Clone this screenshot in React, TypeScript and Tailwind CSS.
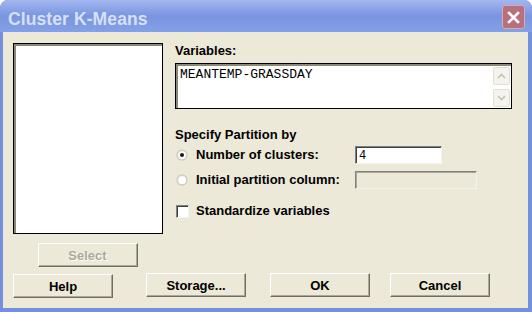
import React from "react";

const ui = { fontFamily: '"Liberation Sans", Arial, sans-serif' };
const mono = { fontFamily: '"Liberation Mono", "Courier New", monospace' };

function Button({
  label,
  disabled,
  className = "",
}: {
  label: string;
  disabled?: boolean;
  className?: string;
}) {
  return (
    <button
      className={`h-[24px] w-[100px] bg-[#ece9d8] border border-t-white border-l-white border-r-[#716f64] border-b-[#716f64] shadow-[inset_-1px_-1px_0_#aca899] text-[13px] font-bold leading-none ${
        disabled ? "text-[#aca899] [text-shadow:1px_1px_0_#ffffff]" : "text-black"
      } ${className}`}
    >
      {label}
    </button>
  );
}

function Radio({ checked }: { checked?: boolean }) {
  return (
    <svg width="12" height="12" viewBox="0 0 12 12" className="shrink-0">
      <circle cx="6" cy="6" r="5.5" fill="#c4c1b3" />
      <circle cx="6" cy="6" r="4.6" fill="#eeede6" />
      <circle cx="6.3" cy="6.3" r="3.6" fill="#ffffff" />
      {checked && <circle cx="6" cy="6" r="2" fill="#1a1a1a" />}
    </svg>
  );
}

function ScrollBtn({ up }: { up?: boolean }) {
  return (
    <div className="w-[17px] h-[18px] bg-[#f4f3ee] border border-[#e2e0d6] rounded-[2px] flex items-center justify-center">
      <svg width="9" height="6" viewBox="0 0 9 6">
        <path
          d={up ? "M1 5 L4.5 1.5 L8 5" : "M1 1 L4.5 4.5 L8 1"}
          fill="none"
          stroke="#c5c2b2"
          strokeWidth="1.6"
        />
      </svg>
    </div>
  );
}

export default function App() {
  return (
    <div className="w-[532px] h-[312px] bg-white" style={ui}>
      <div className="w-full h-full rounded-t-[8px] bg-[#7390dd] flex flex-col pl-[3px] pr-[4px] pb-[4px] overflow-hidden">
        {/* title bar */}
        <div className="h-[32px] -ml-[3px] -mr-[4px] px-[8px] flex items-center justify-between bg-gradient-to-b from-[#a3b7ef] via-[#7995e0] to-[#84a0e7] rounded-t-[8px]">
          <span className="text-[17.5px] font-bold text-[#d6e1f7] tracking-[0.1px] mt-[7px]">
            Cluster K-Means
          </span>
          <div className="w-[23px] h-[24px] mr-[-1px] mt-[2px] rounded-[3px] bg-[#b7707d] border border-[#d8aab3] flex items-center justify-center">
            <svg width="13" height="13" viewBox="0 0 13 13">
              <path d="M2 2 L11 11 M11 2 L2 11" stroke="white" strokeWidth="2.6" strokeLinecap="square" />
            </svg>
          </div>
        </div>

        {/* client area */}
        <div className="flex-1 bg-[#ece9d8] flex flex-col">
          <div className="flex pl-[10px] pt-[11px]">
            {/* left column */}
            <div className="w-[150px] flex flex-col items-center">
              <div className="w-[150px] h-[191px] bg-white border border-black shadow-[inset_2px_2px_0_#8b8878]" />
              <Button label="Select" disabled className="mt-[9px] w-[99px] -ml-[1px]" />
            </div>

            {/* right column */}
            <div className="ml-[12px] flex flex-col text-[13px] font-bold text-black">
              <div className="h-[16px] leading-[16px]">Variables:</div>
              <div className="mt-[4px] w-[337px] h-[46px] bg-white border border-black shadow-[inset_2px_2px_0_#8b8878] flex justify-between pl-[4px] pt-[2px] pr-[1px]">
                <span className="text-[13px] font-normal leading-[16px] mt-[1px]" style={mono}>
                  MEANTEMP-GRASSDAY
                </span>
                <div className="flex flex-col gap-[4px] pt-[1px]">
                  <ScrollBtn up />
                  <ScrollBtn />
                </div>
              </div>

              <div className="mt-[18px] h-[16px] leading-[16px]">Specify Partition by</div>

              <div className="mt-[3px] h-[18px] flex items-center">
                <div className="w-[180px] flex items-center gap-[8px] pl-[1px]">
                  <Radio checked />
                  <span>Number of clusters:</span>
                </div>
                <div className="w-[87px] h-[18px] bg-white border border-t-[#808080] border-l-[#808080] border-r-[#f4f3ee] border-b-[#f4f3ee] shadow-[inset_1px_1px_0_#404040] pl-[3px] flex items-center">
                  <span className="text-[12px] font-normal leading-none pt-[2px]" style={mono}>
                    4
                  </span>
                </div>
              </div>

              <div className="mt-[7px] h-[18px] flex items-center">
                <div className="w-[180px] flex items-center gap-[8px] pl-[1px]">
                  <Radio />
                  <span>Initial partition column:</span>
                </div>
                <div className="w-[122px] h-[18px] bg-[#ece9d8] border border-t-[#808080] border-l-[#808080] border-r-[#f4f3ee] border-b-[#f4f3ee] shadow-[inset_1px_1px_0_#aca899]" />
              </div>

              <div className="mt-[14px] h-[16px] flex items-center gap-[7px] pl-[1px]">
                <div className="w-[13px] h-[13px] bg-white border border-t-[#808080] border-l-[#808080] border-r-[#f4f3ee] border-b-[#f4f3ee] shadow-[inset_1px_1px_0_#404040]" />
                <span>Standardize variables</span>
              </div>
            </div>
          </div>

          {/* bottom buttons */}
          <div className="flex mt-[7px] pl-[10px]">
            <Button label="Help" className="w-[99px]" />
            <Button label="Storage..." className="ml-[33px] -mt-[1px]" />
            <Button label="OK" className="ml-[24px] -mt-[1px]" />
            <Button label="Cancel" className="ml-[20px] -mt-[1px]" />
          </div>
        </div>
      </div>
    </div>
  );
}
